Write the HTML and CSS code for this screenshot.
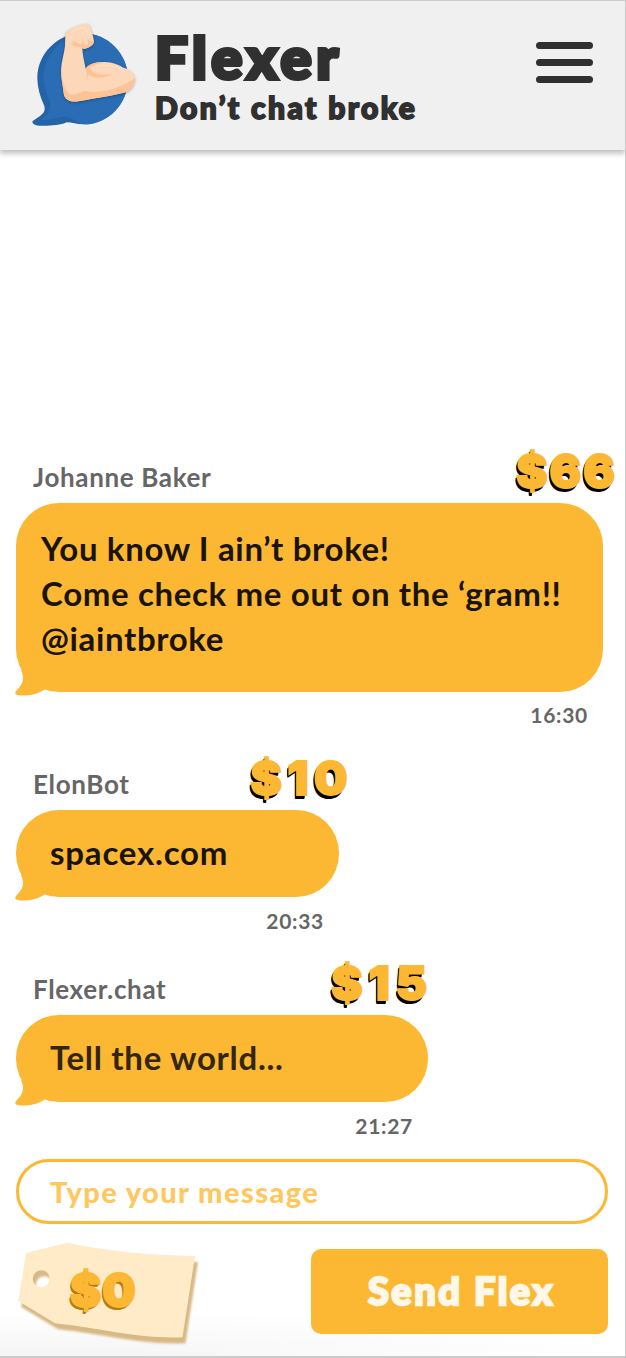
FILE: index.html
```
<!DOCTYPE html>
<html lang="en">

<head>
    <meta charset="UTF-8">
    <meta name="viewport" content="width=device-width, initial-scale=1.0">
    <title>Flexer</title>
    <link rel="stylesheet" href="styles.css">
</head>

<body>
    <div class="app">
        <header class="header">
            <svg class="logo" viewBox="90 60 330 330" aria-hidden="true">
                <path fill="#2463a8" d="M133 318C120 290 112 262 112 235C112 162 172 100 248 100C324 100 384 162 384 236C384 311 325 373 250 373C230 373 215 367 200 367C180 377 140 378 118 377C100 376 95 367 98 363C120 348 139 340 133 318Z"/>
                <path fill="#2a6db5" d="M150 318C154 298 131 280 131 235C131 175 170 116 248 100C324 100 384 162 384 236C384 311 325 373 255 373C235 372 218 353 196 350C178 352 150 360 124 360C138 346 149 336 150 318Z"/>
                <path class="arm" fill="#fdd7b9" d="M196 103C197 97 203 92 211 87C230 77 246 73 259 71C266 71 270 77 271 83L276 99C279 109 283 121 281 129C278 137 265 144 254 146C251 148 248 146 247 144C247 163 253 184 257 206C270 190 290 186 315 186C337 187 356 194 370 203C386 207 401 219 404 235C405 252 394 267 379 276C340 287 290 294 239 303C219 307 199 305 192 286C190 264 183 237 183 209C184 185 193 160 195 137Z"/>
                <path fill="#fdc395" d="M183 202C190 230 185 263 209 284C224 285 235 278 258 273C300 285 370 261 404 235C405 252 394 267 379 276C340 287 290 294 239 303C219 307 199 305 192 286C190 262 182 236 183 202Z"/>
                <path fill="#fdc395" d="M257 205C270 189 290 186 315 186C300 191 277 195 268 204C276 222 310 230 342 219C315 237 278 238 264 222L262 239Z"/>
                <path fill="#fdc395" d="M247 144C234 140 220 136 208 134C220 132 224 130 215 122C229 126 235 129 237 133L248 131L245 117C250 128 253 134 261 136L265 131C263 125 262 119 263 114C270 134 278 125 281 118C283 130 278 137 265 143C258 145 252 148 247 144Z"/>
                <path fill="none" stroke="#fee8d7" stroke-width="2" stroke-linecap="round" d="M215 97C229 87 241 83 253 82L263 100M290 197C315 192 340 197 360 206"/>
            </svg>
            <div class="brand">
                <h1 class="title">Flexer</h1>
                <p class="slogan">Don’t chat broke</p>
            </div>
            <button type="button" class="menu" aria-label="Menu">
                <span class="menu_line"></span>
                <span class="menu_line"></span>
                <span class="menu_line"></span>
            </button>
        </header>

        <main class="chat">
            <div class="message message_large">
                <div class="message_head">
                    <span class="name">Johanne Baker</span>
                    <span class="price price_66">$66</span>
                </div>
                <div class="bubble">
                    <p class="text">You know I ain’t broke!<br>Come check me out on the ‘gram!!<br>@iaintbroke</p>
                    <svg class="tail" viewBox="0 0 46 36"><path d="M7 10C11 19 9 24 2 31C0 34 2 35.5 9 35.5C19 35.5 26 33 31 29L45 20L20 5Z"/></svg>
                </div>
                <time class="time">16:30</time>
            </div>

            <div class="message message_small">
                <div class="message_head">
                    <span class="name">ElonBot</span>
                    <span class="price price_10">$10</span>
                </div>
                <div class="bubble">
                    <p class="text text_link">spacex.com</p>
                    <svg class="tail" viewBox="0 0 46 36"><path d="M7 10C11 19 9 24 2 31C0 34 2 35.5 9 35.5C19 35.5 26 33 31 29L45 20L20 5Z"/></svg>
                </div>
                <time class="time">20:33</time>
            </div>

            <div class="message message_medium">
                <div class="message_head">
                    <span class="name">Flexer.chat</span>
                    <span class="price price_15">$15</span>
                </div>
                <div class="bubble">
                    <p class="text text_soft">Tell the world...</p>
                    <svg class="tail" viewBox="0 0 46 36"><path d="M7 10C11 19 9 24 2 31C0 34 2 35.5 9 35.5C19 35.5 26 33 31 29L45 20L20 5Z"/></svg>
                </div>
                <time class="time">21:27</time>
            </div>
        </main>

        <footer class="footer">
            <input type="text" class="input" placeholder="Type your message">
            <div class="actions">
                <div class="tag">
                    <svg class="tag_shape" viewBox="0 0 190 106" aria-hidden="true">
                        <path fill="#ffebc8" fill-rule="evenodd" d="M10 13L51 2.7Q110 15 179 16L166.5 97.2C120 99 85 88 39 83.3L2.3 61ZM33.8 38.7a8.5 8.5 0 1 0 -17 0a8.5 8.5 0 1 0 17 0Z"/>
                    </svg>
                    <span class="price price_tag">$0</span>
                </div>
                <button type="button" class="send">Send Flex</button>
            </div>
        </footer>
    </div>
</body>

</html>
```
FILE: styles.css
```
* {
    box-sizing: border-box;
}

body {
    margin: 0;
    font-family: "Open Sans", "Noto Sans", sans-serif;
    background-color: white;
}

.app {
    display: flex;
    flex-direction: column;
    width: 626px;
    height: 1358px;
    border: 1px solid #cbcbcb;
    border-left: none;
    border-bottom-width: 2px;
    background: radial-gradient(ellipse 560px 45px at 70px 100%, #f5f5f5, white);
    overflow: hidden;
}

h1,
p {
    margin: 0;
}

.header {
    display: flex;
    align-items: flex-start;
    height: 149px;
    padding: 19px 32px 0 30px;
    background-color: #f0f0f0;
    box-shadow: 0 2px 6px 1px rgba(0, 0, 0, 0.28);
}

.logo {
    width: 110px;
    height: 110px;
}

.arm {
    filter: drop-shadow(0 3px 4px rgba(0, 0, 0, 0.3));
}

.brand {
    flex: 1;
    padding: 4px 0 0 15px;
    font-family: Lato, sans-serif;
    color: #303030;
    white-space: nowrap;
}

.title {
    padding-top: 1px;
    font-size: 58px;
    font-weight: 900;
    line-height: 63px;
    letter-spacing: 4.6px;
    -webkit-text-stroke: 4px #303030;
}

.slogan {
    padding-top: 2px;
    font-size: 30px;
    font-weight: 900;
    line-height: 34px;
    letter-spacing: 2.4px;
    -webkit-text-stroke: 1.8px #303030;
}

.menu {
    display: flex;
    flex-direction: column;
    gap: 10px;
    margin-top: 22px;
    padding: 0;
    border: none;
    background: none;
}

.menu_line {
    width: 57px;
    height: 7px;
    border-radius: 4px;
    background-color: #303030;
}

.chat {
    flex: 1;
    display: flex;
    flex-direction: column;
    justify-content: flex-end;
    gap: 32px;
    padding: 0 16px 20px;
}

.message_large {
    width: 587px;
}

.message_small {
    width: 323px;
}

.message_medium {
    width: 412px;
}

.message_head {
    display: flex;
    justify-content: space-between;
    height: 49px;
    padding-left: 17px;
}

.name {
    font-family: Lato, sans-serif;
    font-size: 26px;
    font-weight: 700;
    line-height: 46px;
    letter-spacing: 0.65px;
    color: #666;
}

.price {
    font-family: Inter, sans-serif;
    font-size: 47px;
    font-weight: 900;
    line-height: 34px;
    color: #fcb733;
    -webkit-text-stroke: 2px #fcb733;
    text-shadow: -1px 1px black, -2px 2px black, -2px 3px black, -2px 4px black;
}

.price_66 {
    margin-right: -14px;
    letter-spacing: 2px;
}

.price_10 {
    margin-right: -14px;
    letter-spacing: 5.5px;
}

.price_15 {
    margin-right: -5px;
    letter-spacing: 6px;
}

.bubble {
    position: relative;
    height: 87px;
    padding: 20px 34px;
    border-radius: 43px;
    background-color: #fcb733;
}

.message_large .bubble {
    height: 189px;
    padding: 23px 25px;
}

.text {
    font-family: Lato, sans-serif;
    font-size: 33px;
    font-weight: 700;
    line-height: 45px;
    letter-spacing: 0.65px;
    color: #1a1406;
    white-space: nowrap;
}

.text_link {
    letter-spacing: 0.8px;
}

.text_soft {
    letter-spacing: 0.7px;
    color: #33260c;
}

.tail {
    position: absolute;
    left: -2px;
    bottom: -4px;
    width: 46px;
    height: 36px;
    fill: #fcb733;
}

.time {
    display: block;
    height: 37px;
    padding: 12px 15px 0 0;
    font-family: Lato, sans-serif;
    font-size: 21px;
    font-weight: 700;
    line-height: 24px;
    letter-spacing: 0.7px;
    text-align: right;
    color: #666;
}

.message_large .time {
    padding-top: 11px;
}

.footer {
    height: 197px;
    padding: 0 17px 0 16px;
}

.input {
    display: block;
    width: 592px;
    height: 65px;
    padding: 0 31px;
    border: 3px solid #fcb733;
    border-radius: 33px;
    background-color: white;
    font-family: Lato, sans-serif;
    font-size: 29px;
    font-weight: 900;
    letter-spacing: 1.4px;
}

.input::placeholder {
    color: #ffc85f;
    opacity: 1;
}

.actions {
    display: flex;
    justify-content: space-between;
    margin-top: 16px;
}

.tag {
    display: grid;
    width: 190px;
    height: 106px;
}

.tag_shape,
.price_tag {
    grid-area: 1 / 1;
}

.tag_shape {
    width: 190px;
    height: 106px;
    filter: drop-shadow(3px 6px 1px #d8b884);
}

.price_tag {
    z-index: 1;
    padding: 33px 0 0 54px;
    letter-spacing: 1px;
    text-shadow: -1px 1px #b57b14, -1px 2px #b57b14, -2px 3px #b57b14;
}

.send {
    width: 297px;
    height: 85px;
    margin-top: 9px;
    padding: 0 0 3px 4px;
    border: none;
    border-radius: 10px;
    background-color: #fcb733;
    font-family: Lato, sans-serif;
    font-size: 38px;
    font-weight: 900;
    letter-spacing: 2.5px;
    color: #fff7e8;
    -webkit-text-stroke: 2.4px #fff7e8;
}
```
